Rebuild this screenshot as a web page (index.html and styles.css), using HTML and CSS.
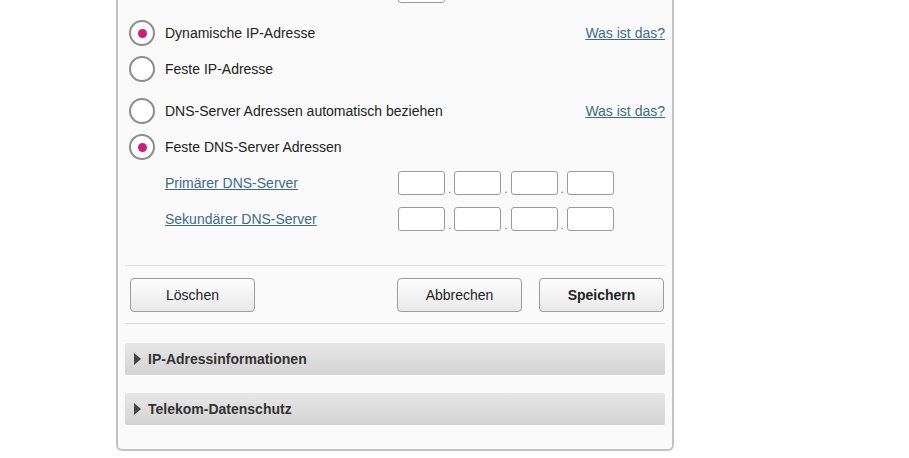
FILE: index.html
```html
<!DOCTYPE html>
<html lang="de">
<head>
    <meta charset="UTF-8">
    <title>Internetverbindung - Einstellungen</title>
    <link rel="stylesheet" href="styles.css">
</head>
<body>
    <div class="panel">
        <div class="top-row">
            <input type="text" class="ip-part">
        </div>

        <div class="radio-row">
            <span class="radio checked"></span>
            <span class="label">Dynamische IP-Adresse</span>
            <a class="help" href="#">Was ist das?</a>
        </div>
        <div class="radio-row">
            <span class="radio"></span>
            <span class="label">Feste IP-Adresse</span>
        </div>

        <div class="radio-row spaced">
            <span class="radio"></span>
            <span class="label">DNS-Server Adressen automatisch beziehen</span>
            <a class="help" href="#">Was ist das?</a>
        </div>
        <div class="radio-row">
            <span class="radio checked"></span>
            <span class="label">Feste DNS-Server Adressen</span>
        </div>

        <div class="dns-row">
            <a class="dns-label" href="#">Primärer DNS-Server</a>
            <div class="ip-group">
                <input type="text" class="ip-part"><span class="dot">.</span>
                <input type="text" class="ip-part"><span class="dot">.</span>
                <input type="text" class="ip-part"><span class="dot">.</span>
                <input type="text" class="ip-part">
            </div>
        </div>
        <div class="dns-row">
            <a class="dns-label" href="#">Sekundärer DNS-Server</a>
            <div class="ip-group">
                <input type="text" class="ip-part"><span class="dot">.</span>
                <input type="text" class="ip-part"><span class="dot">.</span>
                <input type="text" class="ip-part"><span class="dot">.</span>
                <input type="text" class="ip-part">
            </div>
        </div>

        <div class="button-row">
            <button class="btn">Löschen</button>
            <div class="button-group">
                <button class="btn">Abbrechen</button>
                <button class="btn primary">Speichern</button>
            </div>
        </div>

        <div class="accordion first">IP-Adressinformationen</div>
        <div class="accordion">Telekom-Datenschutz</div>
    </div>
</body>
</html>
```

FILE: styles.css
```css
body {
    font-family: "Liberation Sans", Arial, sans-serif;
    font-size: 14px;
    color: #222;
    background-color: white;
    margin: 0;
}
.panel {
    width: 540px;
    margin: -40px 0 0 116px;
    padding: 0 7px 24px;
    background-color: #fafafa;
    border: 2px solid #c2c2c2;
    border-top: none;
    border-radius: 0 0 6px 6px;
}
.top-row {
    padding: 19px 0 0 273px;
    height: 24px;
    margin-bottom: 12px;
}
.radio-row {
    display: flex;
    align-items: center;
    height: 36px;
}
.radio-row.spaced {
    margin-top: 6px;
}
.radio {
    box-sizing: border-box;
    width: 26px;
    height: 26px;
    margin: 0 10px 0 4px;
    border: 2px solid #8c8c8c;
    border-radius: 50%;
    background-color: white;
    display: flex;
    align-items: center;
    justify-content: center;
}
.radio.checked::after {
    content: "";
    width: 9px;
    height: 9px;
    border-radius: 50%;
    background-color: #d21a76;
}
.label {
    flex: 1;
}
.help, .dns-label {
    color: #3b6b8c;
    text-decoration: underline;
}
.dns-row {
    display: flex;
    align-items: center;
    height: 36px;
    padding-left: 40px;
}
.dns-label {
    width: 233px;
}
.ip-group {
    display: flex;
    align-items: flex-end;
}
.ip-part {
    box-sizing: border-box;
    width: 47px;
    height: 24px;
    margin: 0;
    border: 1px solid #9a9a9a;
    border-radius: 3px;
    background-color: white;
}
.dot {
    width: 9.3px;
    text-align: center;
    font-size: 10px;
    line-height: 10px;
    color: #555;
}
.button-row {
    display: flex;
    justify-content: space-between;
    margin-top: 28px;
    padding: 12px 1px 11px 5px;
    border-top: 1px solid #dcdcdc;
    border-bottom: 1px solid #dcdcdc;
}
.button-group {
    display: flex;
    gap: 17px;
}
.btn {
    width: 125px;
    height: 34px;
    font-family: "Liberation Sans", Arial, sans-serif;
    font-size: 14px;
    color: #222;
    background: linear-gradient(#fdfdfd, #e9e9e9);
    border: 1px solid #9c9c9c;
    border-radius: 4px;
    cursor: pointer;
}
.btn.primary {
    font-weight: bold;
}
.accordion {
    display: flex;
    align-items: center;
    height: 32px;
    margin-top: 18px;
    padding-left: 9px;
    font-weight: bold;
    color: #333;
    background: linear-gradient(#e7e7e7, #d3d3d3);
    border-radius: 2px;
}
.accordion.first {
    margin-top: 19px;
}
.accordion::before {
    content: "";
    margin-right: 7px;
    border-top: 6px solid transparent;
    border-bottom: 6px solid transparent;
    border-left: 7px solid #444;
}
```
